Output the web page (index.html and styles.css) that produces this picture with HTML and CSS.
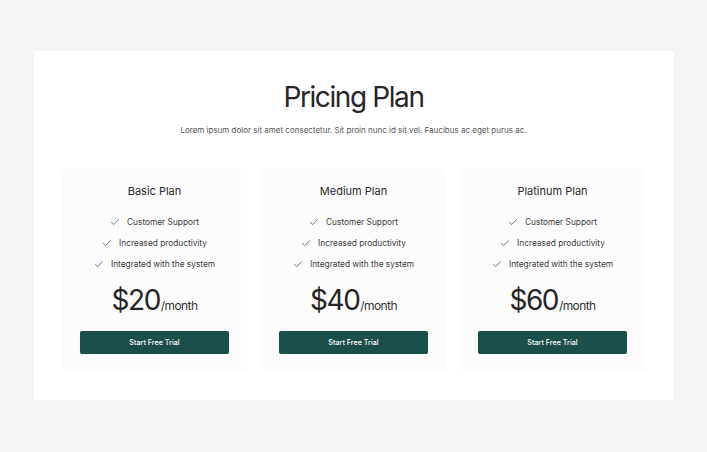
FILE: index.html
```html
<!DOCTYPE html>
<html>
<head>
<meta charset="utf-8">
<link rel="stylesheet" href="styles.css">
</head>
<body>
<div class="page">
  <section class="panel">
    <h1 class="title">Pricing Plan</h1>
    <p class="subtitle">Lorem ipsum dolor sit amet consectetur. Sit proin nunc id sit vel. Faucibus ac eget purus ac.</p>
    <div class="cards">
      <div class="card">
        <h2 class="card-title">Basic Plan</h2>
        <ul class="features">
          <li><svg class="check" viewBox="0 0 12 12"><path d="M1.5 6.2 4.4 9 10.5 3"/></svg>Customer Support</li>
          <li><svg class="check" viewBox="0 0 12 12"><path d="M1.5 6.2 4.4 9 10.5 3"/></svg>Increased productivity</li>
          <li><svg class="check" viewBox="0 0 12 12"><path d="M1.5 6.2 4.4 9 10.5 3"/></svg>Integrated with the system</li>
        </ul>
        <div class="price"><span class="amount">$20</span><span class="per">/month</span></div>
        <button class="cta">Start Free Trial</button>
      </div>
      <div class="card">
        <h2 class="card-title">Medium Plan</h2>
        <ul class="features">
          <li><svg class="check" viewBox="0 0 12 12"><path d="M1.5 6.2 4.4 9 10.5 3"/></svg>Customer Support</li>
          <li><svg class="check" viewBox="0 0 12 12"><path d="M1.5 6.2 4.4 9 10.5 3"/></svg>Increased productivity</li>
          <li><svg class="check" viewBox="0 0 12 12"><path d="M1.5 6.2 4.4 9 10.5 3"/></svg>Integrated with the system</li>
        </ul>
        <div class="price"><span class="amount">$40</span><span class="per">/month</span></div>
        <button class="cta">Start Free Trial</button>
      </div>
      <div class="card">
        <h2 class="card-title">Platinum Plan</h2>
        <ul class="features">
          <li><svg class="check" viewBox="0 0 12 12"><path d="M1.5 6.2 4.4 9 10.5 3"/></svg>Customer Support</li>
          <li><svg class="check" viewBox="0 0 12 12"><path d="M1.5 6.2 4.4 9 10.5 3"/></svg>Increased productivity</li>
          <li><svg class="check" viewBox="0 0 12 12"><path d="M1.5 6.2 4.4 9 10.5 3"/></svg>Integrated with the system</li>
        </ul>
        <div class="price"><span class="amount">$60</span><span class="per">/month</span></div>
        <button class="cta">Start Free Trial</button>
      </div>
    </div>
  </section>
</div>
</body>
</html>
```
FILE: styles.css
```css
* { box-sizing: border-box; }
html, body { margin: 0; padding: 0; }
body {
  background: #f4f4f4;
  font-family: Inter, "Noto Sans", sans-serif;
  color: #2b2b2b;
  width: 707px;
  height: 452px;
  overflow: hidden;
}
.page {
  padding: 51px 33px 0 34px;
}
.panel {
  background: #ffffff;
  width: 640px;
  height: 349px;
  padding: 29px 29px 0 28px;
  text-align: center;
}
.title {
  margin: 0;
  font-size: 28px;
  font-weight: 400;
  line-height: 34px;
  color: #262626;
  letter-spacing: -1.4px;
}
.subtitle {
  margin: 10px 0 0;
  font-size: 8px;
  line-height: 12px;
  color: #555;
}
.cards {
  display: grid;
  grid-template-columns: repeat(3, 185px);
  column-gap: 14px;
  margin-top: 32px;
}
.card {
  background: #fcfcfc;
  border-radius: 3px;
  height: 204px;
  padding: 16px 18px 0;
  display: flex;
  flex-direction: column;
  align-items: center;
}
.card-title {
  margin: 0;
  font-size: 11px;
  font-weight: 400;
  line-height: 14px;
  color: #2b2b2b;
}
.features {
  list-style: none;
  margin: 17.5px 0 0;
  padding: 0;
  display: flex;
  flex-direction: column;
  align-items: center;
  gap: 8.5px;
}
.features li {
  display: flex;
  align-items: center;
  gap: 7px;
  font-size: 8.3px;
  line-height: 12.5px;
  color: #3a3a3a;
}
.check {
  width: 10px;
  height: 10px;
  fill: none;
  stroke: #555;
  stroke-width: 1;
}
.price {
  margin-top: 12.5px;
  display: flex;
  align-items: baseline;
  line-height: 34px;
}
.amount {
  font-size: 28px;
  color: #262626;
  letter-spacing: -1.5px;
  margin-right: 1px;
}
.per {
  font-size: 12px;
  color: #333;
  letter-spacing: -0.6px;
}
.cta {
  margin-top: 8px;
  width: 149px;
  height: 23px;
  border: none;
  border-radius: 2px;
  background: #1a5049;
  color: #ffffff;
  font-family: Inter, "Noto Sans", sans-serif;
  font-size: 7.2px;
  font-weight: 500;
  box-shadow: 0 0 1px rgba(0,0,0,0.25);
  cursor: pointer;
}
```
